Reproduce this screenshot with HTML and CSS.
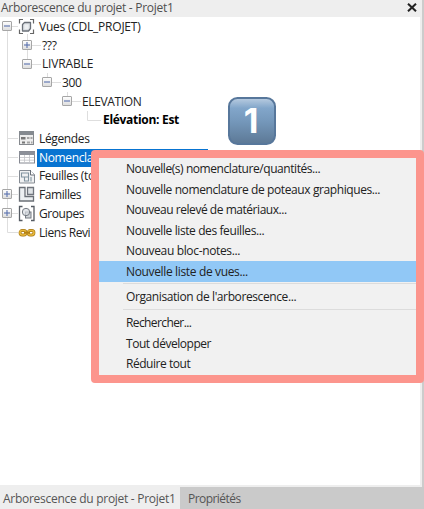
FILE: index.html
```html
<!DOCTYPE html>
<html lang="fr">
<head>
<meta charset="utf-8">
<title>Arborescence du projet - Projet1</title>
<link rel="stylesheet" href="styles.css">
</head>
<body>
<svg class="defs" width="0" height="0" aria-hidden="true">
  <defs>
    <linearGradient id="tg" x1="0" y1="0" x2="0" y2="1"><stop offset="0" stop-color="#fff"/><stop offset="1" stop-color="#dcdcdc"/></linearGradient>
    <g id="minus"><rect x=".5" y=".5" width="9" height="9" rx=".5" fill="url(#tg)" stroke="#a6a6a6"/><path d="M2 5h6" stroke="#5870ae" stroke-width="1.1"/></g>
    <g id="plus"><use href="#minus"/><path d="M5 2v6" stroke="#5870ae" stroke-width="1.1"/></g>
  </defs>
</svg>
<main class="panel">
  <header class="title"><span>Arborescence du projet - Projet1</span>
    <svg class="close" width="10" height="9" viewBox="0 0 10 9"><path d="M1 .7 9 8.3M9 .7 1 8.3" stroke="#222" stroke-width="2"/></svg>
  </header>
  <section class="tree">
    <div class="row"><svg class="g0" viewBox="0 0 36 19"><path class="ln" d="M7.5 14v5M12 9.5h6M27.500 17v2"/><use href="#minus" x="2" y="4"/><path d="M23 2.500h-3.500v4M30 2.500h3.500v4M23 16.500h-3.500v-4M30 16.500h3.500v-4" fill="none" stroke="#666" stroke-width="1.200"/><path d="M22.500 7.500 24.500 5.500h6v6l-2 2.500h-6z" fill="#dce0e4" stroke="#6b7078" stroke-width="1.300" stroke-linejoin="round"/><path d="M24.500 7.500h4v4.500h-4z" fill="#eef0f2"/></svg><span class="root">Vues (CDL_PROJET)</span></div>
    <div class="row"><svg class="g1" viewBox="0 0 41 19"><path class="ln" d="M7.500 0v19M27.500 0v19M32 9.500h9"/><use href="#plus" x="22" y="4"/></svg><span>???</span></div>
    <div class="row"><svg class="g1" viewBox="0 0 41 19"><path class="ln" d="M7.500 0v19M27.500 0v5M32 9.500h9"/><use href="#minus" x="22" y="4"/></svg><span class="wide">LIVRABLE</span></div>
    <div class="row"><svg class="g2" viewBox="0 0 61 19"><path class="ln" d="M7.500 0v19M47.500 0v5M52 9.500h9"/><use href="#minus" x="42" y="4"/></svg><span>300</span></div>
    <div class="row"><svg class="g3" viewBox="0 0 81 19"><path class="ln" d="M7.500 0v19M67.500 0v5M72 9.500h9"/><use href="#minus" x="62" y="4"/></svg><span>ELEVATION</span></div>
    <div class="row"><svg class="g4" viewBox="0 0 101 19"><path class="ln" d="M7.500 0v19M87.500 0v9.500H101"/></svg><span class="current">Elévation: Est</span></div>
    <div class="row"><svg class="g0" viewBox="0 0 36 19"><path class="ln" d="M7.500 0v19M7.500 9.500H18"/><rect x="19.500" y="2.500" width="14" height="13" fill="#ededed" stroke="#85898e"/><path d="M19 2.500h15v3.500H19z" fill="#858a90"/><path d="M21 8h4.500v2.500h-4.500zM22 12.500h3v2h-3z" fill="#777"/><path d="M27 9h2.500M30.500 9h2M27 13.500h3M31 13.500h1.500" stroke="#a5a5a5" stroke-width="1.800"/></svg><span>Légendes</span></div>
    <div class="row"><svg class="g0" viewBox="0 0 36 19"><path class="ln" d="M7.500 0v19M7.500 9.500H18"/><rect x="19.500" y="3.500" width="15" height="11.500" fill="#fff" stroke="#858891"/><path d="M19 3.500h16v3.500H19z" fill="#8c9099"/><path d="M20 9.500h14M20 12.200h14M24.500 7v8M29.500 7v8" stroke="#c2c3c8" stroke-width=".8"/></svg><span class="selected">Nomencla</span></div>
    <div class="row"><svg class="g0" viewBox="0 0 36 19"><path class="ln" d="M7.500 0v19M7.500 9.500H18"/><path d="M19.500 3.500h11l4 4v8.500h-15z" fill="#f0f1f2" stroke="#858b93"/><path d="M30.500 3v5h4" fill="#fff" stroke="#686e76"/><path d="M21.500 6h7v8h-4v-4h-3zM24.500 10h4M31 10v4.500" fill="none" stroke="#8294a0" stroke-width="1.100"/></svg><span>Feuilles (to</span></div>
    <div class="row"><svg class="g0" viewBox="0 0 36 19"><path class="ln" d="M7.500 0v19M12 9.500h6"/><use href="#plus" x="2" y="4"/><path d="M19.500 2.500h5.500v9h8.500v4.500h-14z" fill="#edf0f2" stroke="#6b7077" stroke-width="1.300"/><path d="M27.500 2.500h6v7h-6z" fill="#dfe3e6" stroke="#70757d" stroke-width="1.300"/></svg><span class="lower">Familles</span></div>
    <div class="row"><svg class="g0" viewBox="0 0 36 19"><path class="ln" d="M7.500 0v19M12 9.500h6"/><use href="#plus" x="2" y="4"/><path d="M22.500 2.500h-3v14h3M31 2.500h3v14h-3" fill="none" stroke="#555b63" stroke-width="1.300"/><rect x="25.500" y="8" width="5.500" height="6" fill="#d2d6da" stroke="#747a82"/><circle cx="26" cy="8" r="3.700" fill="#d9dde2" fill-opacity=".7" stroke="#747a82"/></svg><span class="lower">Groupes</span></div>
    <div class="row"><svg class="g0" viewBox="0 0 36 19"><path class="ln" d="M7.500 0v9.500H18"/><g fill="none" stroke="#a87916" stroke-width="2.800"><rect x="20" y="7.500" width="6" height="4.500" rx="2.200"/><rect x="28" y="7.500" width="6" height="4.500" rx="2.200"/></g><g fill="none" stroke="#e8b93b" stroke-width="1.500"><rect x="20" y="7.500" width="6" height="4.500" rx="2.200"/><rect x="28" y="7.500" width="6" height="4.500" rx="2.200"/></g><path d="M24 9.700h6" stroke="#b38116" stroke-width="2"/></svg><span class="lower">Liens Revi</span></div>
  </section>
  <footer class="tabs"><span class="tab active">Arborescence du projet - Projet1</span><span class="tab">Propriétés</span></footer>
</main>
<div class="badge"><svg width="48" height="48" viewBox="0 0 48 48"><defs><linearGradient id="bg" x1="0" y1="0" x2="0" y2="1"><stop offset="0" stop-color="#bacde1"/><stop offset=".22" stop-color="#82a6ca"/><stop offset=".5" stop-color="#7598bb"/><stop offset="1" stop-color="#5c7895"/></linearGradient></defs><rect x="1" y="1" width="46" height="46" rx="8.500" fill="url(#bg)" stroke="#57779b" stroke-width="2"/></svg><span>1</span></div>
<nav class="menu">
  <div class="item i1">Nouvelle(s) nomenclature/quantités...</div>
  <div class="item i2">Nouvelle nomenclature de poteaux graphiques...</div>
  <div class="item i3">Nouveau relevé de matériaux...</div>
  <div class="item i2">Nouvelle liste des feuilles...</div>
  <div class="item">Nouveau bloc-notes...</div>
  <div class="item hover">Nouvelle liste de vues...</div>
  <hr>
  <div class="item i2">Organisation de l'arborescence...</div>
  <hr>
  <div class="item i4">Rechercher...</div>
  <div class="item i3">Tout développer</div>
  <div class="item i3">Réduire tout</div>
</nav>
</body>
</html>
```
FILE: styles.css
```css
* { box-sizing: border-box; }
body { margin: 0; width: 424px; height: 509px; overflow: hidden; background: #fff; font: 12px/18px "Open Sans", "Noto Sans", sans-serif; letter-spacing: -0.35px; color: #222; white-space: nowrap; }
.defs { position: absolute; }
.panel { width: 424px; height: 509px; display: flex; flex-direction: column; border-right: 2px solid #ccc; }
.title { height: 17px; flex: none; display: flex; justify-content: space-between; align-items: center; padding: 0 5px 1px 1px; background: #eee; color: #505050; letter-spacing: -.28px; }
.title svg { margin-top: -1px; }
.tree { flex: 1; padding-top: .6px; border-right: 2px solid #eee; border-bottom: 2px solid #eee; }
.row { display: flex; align-items: center; height: 18.68px; }
.row svg { height: 19px; flex: none; }
.row span { line-height: 18px; }
.row .root { letter-spacing: -.23px; }
.row .wide { letter-spacing: -.15px; }
.row .lower { line-height: 19px; letter-spacing: -.42px; }
.g0 { width: 36px; margin-right: 3px; }
.g1 { width: 41px; margin-right: 1px; }
.g2 { width: 61px; margin-right: 1px; }
.g3 { width: 81px; margin-right: 1px; }
.g4 { width: 101px; margin-right: 2px; }
.ln { fill: none; stroke: #dedede; }
.current { font-weight: 700; color: #000; letter-spacing: -.3px; }
.row .selected { width: 171px; margin-left: -2px; padding-left: 2px; background: #0874d1; color: #fff; }
.tabs { height: 22px; flex: none; display: flex; background: #cacaca; margin-right: -2px; }
.tab { padding: 0 6px 0 3px; color: #555; line-height: 23px; letter-spacing: -.28px; }
.active { width: 180px; background: #eee; }
.tab + .tab { padding-left: 8px; letter-spacing: -.55px; }
.badge { position: absolute; left: 228px; top: 97px; width: 48px; height: 48px; display: grid; place-items: center; }
.badge svg, .badge span { grid-area: 1 / 1; }
.badge span { font: 700 34px/46px Inter, sans-serif; letter-spacing: 0; color: #fff; padding-right: 2px; }
.menu { position: absolute; left: 91px; top: 150px; width: 333px; height: 233px; border: 8px solid #fc958d; border-radius: 4px; background: #f1f1f1; }
.item { height: 20.6px; line-height: 22px; padding-left: 27px; }
.i1 { letter-spacing: -.43px; }
.i2 { letter-spacing: -.4px; }
.i3 { letter-spacing: -.46px; }
.i4 { letter-spacing: -.6px; }
.hover { background: #91c8f6; }
hr { height: 1px; margin: 1.5px 0 2.4px 24px; border: 0; background: #dcdcdc; }
```
